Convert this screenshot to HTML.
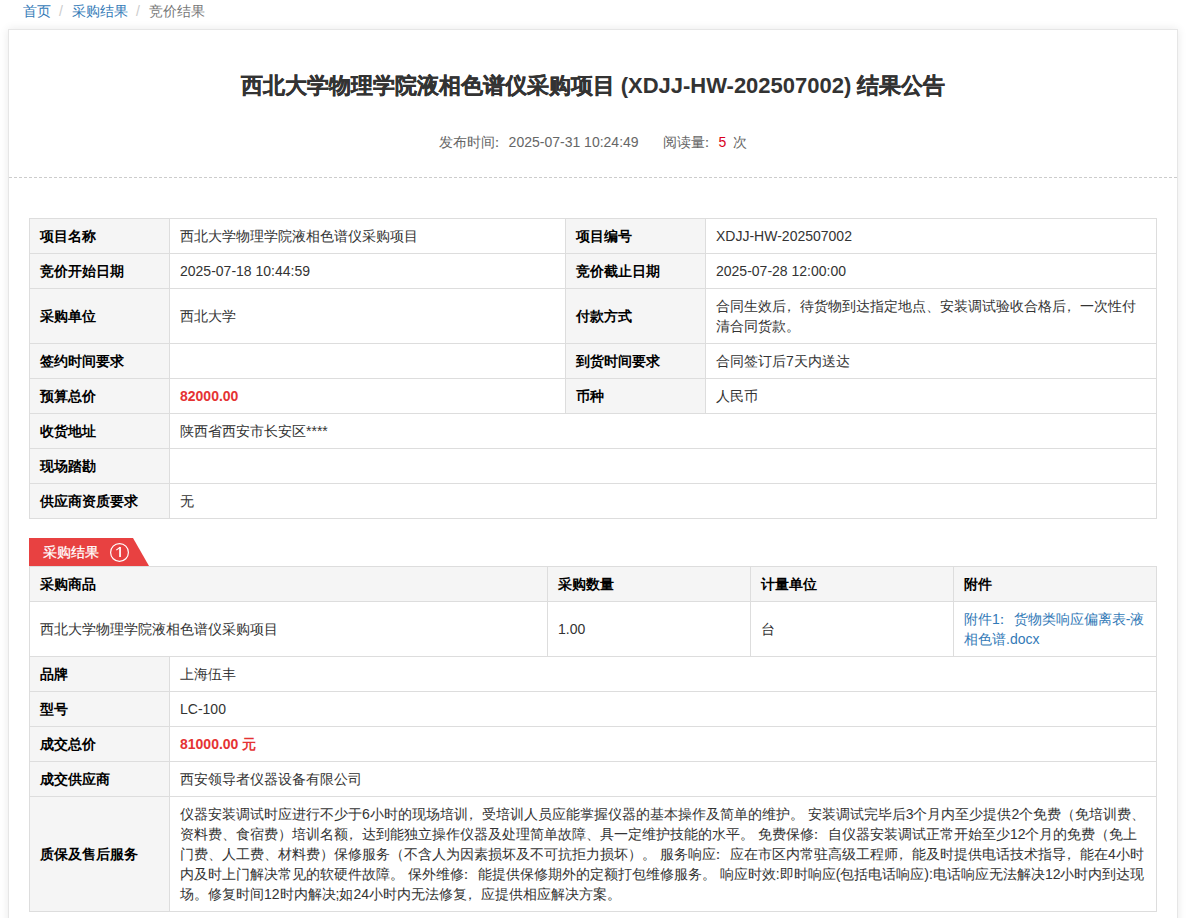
<!DOCTYPE html>
<html><head><meta charset="utf-8">
<style>
*{box-sizing:border-box;margin:0;padding:0}
html,body{width:1189px;height:918px;overflow:hidden;background:#fff}
body{font-family:"Liberation Sans",sans-serif;font-size:14px;color:#333;position:relative}
.crumb{position:absolute;left:23px;top:2px;font-size:14px;line-height:18px;color:#777}
.crumb a{color:#337ab7;text-decoration:none}
.crumb .sep{color:#ccc;padding:0 9px 0 8px}
.card{position:absolute;left:8px;top:29px;width:1170px;height:1000px;border:1px solid #e6e6e6;box-shadow:0 0 9px rgba(0,0,0,.09);background:#fff}
.title{position:absolute;left:0;width:100%;top:42px;-webkit-text-stroke:0.3px #333;text-align:center;font-size:22px;font-weight:bold;color:#333;line-height:28px}
.meta{position:absolute;left:0;width:100%;top:103px;text-align:center;font-size:14px;color:#666;line-height:18px}
.meta .r{color:#d9001b}
.dash{position:absolute;left:0;right:0;top:147px;border-top:1px dashed #ccc}
table{border-collapse:collapse;position:absolute;table-layout:fixed}
td,th{border:1px solid #ddd;font-size:14px;color:#333;padding:0 10px;text-align:left;vertical-align:middle;line-height:20px}
.lab{background:#f5f5f5;font-weight:bold;color:#000}
.t1{left:20px;top:188px;width:1127px}
.red{color:#e53333;font-weight:bold}
.tab{position:absolute;left:20px;top:508px;height:28px;width:120px}
.tabbg{position:absolute;left:0;top:0;width:120px;height:28px;background:#e84141;clip-path:polygon(0 0,104px 0,120px 28px,0 28px)}
.tabt{position:absolute;left:14px;top:4px;line-height:20px;font-size:14px;color:#fff;-webkit-text-stroke:0.25px #fff}
.num{position:absolute;left:81px;top:4.9px;width:19px;height:19px;border:1.2px solid #fff;border-radius:50%;color:#fff;font-size:13.5px;line-height:16px;text-align:center;-webkit-text-stroke:0.3px #fff}
.t2{left:20px;top:536px;width:1127px}
a.lnk{color:#337ab7;text-decoration:none}
i.pc{font-style:normal;position:relative;left:-4px}
i.pk{font-style:normal;position:relative;left:-5px}
</style></head>
<body>
<div class="crumb"><a>首页</a><span class="sep">/</span><a>采购结果</a><span class="sep">/</span>竞价结果</div>
<div class="card">
  <div class="title">西北大学物理学院液相色谱仪采购项目<span style="-webkit-text-stroke:0"> (XDJJ-HW-202507002) </span>结果公告</div>
  <div class="meta"><span>发布时间<i class="pk">：</i>2025-07-31 10:24:49</span><span style="margin-left:24px">阅读量<i class="pk">：</i><span class="r">5</span><span style="margin-left:7px">次</span></span></div>
  <div class="dash"></div>
  <table class="t1">
    <colgroup><col style="width:140px"><col style="width:396px"><col style="width:140px"><col style="width:451px"></colgroup>
    <tr style="height:35px"><td class="lab">项目名称</td><td>西北大学物理学院液相色谱仪采购项目</td><td class="lab">项目编号</td><td>XDJJ-HW-202507002</td></tr>
    <tr style="height:35px"><td class="lab">竞价开始日期</td><td>2025-07-18 10:44:59</td><td class="lab">竞价截止日期</td><td>2025-07-28 12:00:00</td></tr>
    <tr style="height:55px"><td class="lab">采购单位</td><td>西北大学</td><td class="lab">付款方式</td><td>合同生效后<i class="pc">，</i>待货物到达指定地点、安装调试验收合格后<i class="pc">，</i>一次性付清合同货款。</td></tr>
    <tr style="height:35px"><td class="lab">签约时间要求</td><td></td><td class="lab">到货时间要求</td><td>合同签订后7天内送达</td></tr>
    <tr style="height:35px"><td class="lab">预算总价</td><td class="red">82000.00</td><td class="lab">币种</td><td>人民币</td></tr>
    <tr style="height:35px"><td class="lab">收货地址</td><td colspan="3">陕西省西安市长安区****</td></tr>
    <tr style="height:35px"><td class="lab">现场踏勘</td><td colspan="3"></td></tr>
    <tr style="height:35px"><td class="lab">供应商资质要求</td><td colspan="3">无</td></tr>
  </table>
  <div class="tab"><div class="tabbg"></div><span class="tabt">采购结果</span><svg style="position:absolute;left:0;top:0" width="120" height="28"><circle cx="90.5" cy="14.45" r="8.9" fill="none" stroke="#fff" stroke-width="1.2"/><rect x="90.2" y="9" width="1.7" height="10" fill="#fff"/><path d="M87.3 12.1 L91.1 9.3" stroke="#fff" stroke-width="1.15" fill="none"/></svg></div>
  <table class="t2">
    <colgroup><col style="width:140px"><col style="width:378px"><col style="width:203px"><col style="width:203px"><col style="width:203px"></colgroup>
    <tr style="height:35px"><td class="lab" colspan="2">采购商品</td><td class="lab">采购数量</td><td class="lab">计量单位</td><td class="lab">附件</td></tr>
    <tr style="height:55px"><td colspan="2">西北大学物理学院液相色谱仪采购项目</td><td>1.00</td><td>台</td><td><a class="lnk">附件1<i class="pk">：</i>货物类响应偏离表-液相色谱.docx</a></td></tr>
    <tr style="height:35px"><td class="lab">品牌</td><td colspan="4">上海伍丰</td></tr>
    <tr style="height:35px"><td class="lab">型号</td><td colspan="4">LC-100</td></tr>
    <tr style="height:35px"><td class="lab">成交总价</td><td colspan="4" class="red">81000.00 元</td></tr>
    <tr style="height:35px"><td class="lab">成交供应商</td><td colspan="4">西安领导者仪器设备有限公司</td></tr>
    <tr style="height:115px"><td class="lab">质保及售后服务</td><td colspan="4">仪器安装调试时应进行不少于6小时的现场培训<i class="pc">，</i>受培训人员应能掌握仪器的基本操作及简单的维护。 安装调试完毕后3个月内至少提供2个免费（免培训费、资料费、食宿费）培训名额<i class="pc">，</i>达到能独立操作仪器及处理简单故障、具一定维护技能的水平。 免费保修<i class="pk">：</i>自仪器安装调试正常开始至少12个月的免费（免上门费、人工费、材料费）保修服务（不含人为因素损坏及不可抗拒力损坏）。 服务响应<i class="pk">：</i>应在市区内常驻高级工程师<i class="pc">，</i>能及时提供电话技术指导<i class="pc">，</i>能在4小时内及时上门解决常见的软硬件故障。 保外维修<i class="pk">：</i>能提供保修期外的定额打包维修服务。 响应时效:即时响应(包括电话响应):电话响应无法解决12小时内到达现场。修复时间12时内解决;如24小时内无法修复<i class="pc">，</i>应提供相应解决方案。</td></tr>
  </table>
</div>
</body></html>
